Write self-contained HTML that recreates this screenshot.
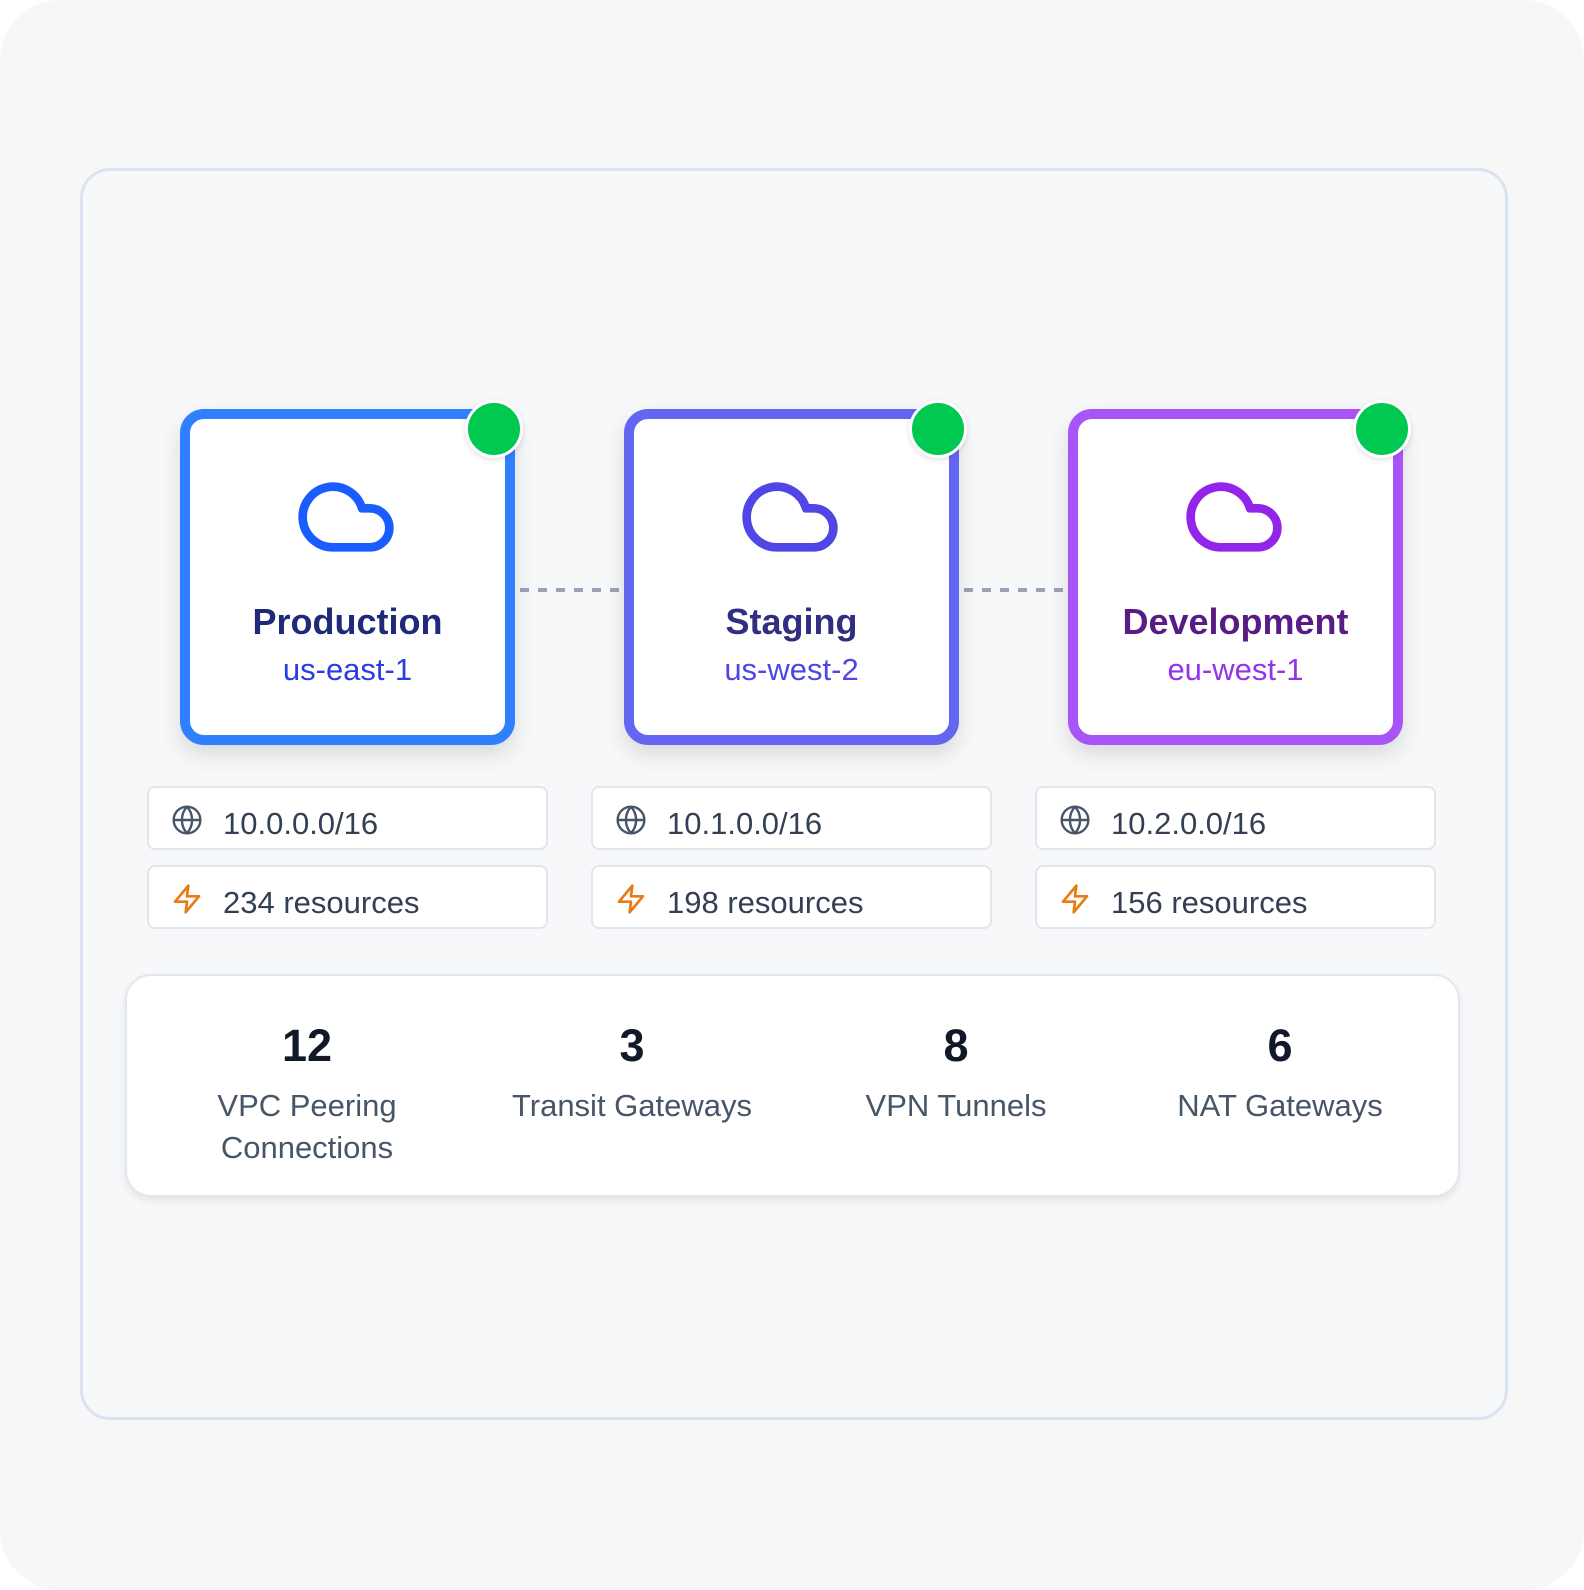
<!DOCTYPE html>
<html><head><meta charset="utf-8"><style>
*{margin:0;padding:0;box-sizing:border-box}
body{width:1584px;height:1590px;background:#fff;font-family:"Liberation Sans",sans-serif;position:relative;overflow:hidden}
.bg{position:absolute;left:0;top:0;width:1584px;height:1590px;background:#f7f7f7;border-radius:60px}
.frame{position:absolute;left:80px;top:168px;width:1428px;height:1252px;border:3px solid #d9e3f1;border-radius:30px;background:#f7f8fa}
.card{position:absolute;top:409px;width:335px;height:336px;border:10px solid;border-radius:24px;background:#fff;box-shadow:0 10px 22px rgba(0,0,0,.12);text-align:center}
.card svg{position:absolute;left:104px;top:46px}
.card .t{position:absolute;left:0;right:0;top:182px;font-size:36px;font-weight:bold}
.card .s{position:absolute;left:0;right:0;top:233px;font-size:31px}
.dot{position:absolute;width:58px;height:58px;border-radius:50%;background:#00c851;border:3px solid #fff;box-shadow:0 2px 6px rgba(0,0,0,.12)}
.line{position:absolute;top:588px;height:4px;background:repeating-linear-gradient(90deg,#9aa3b5 0 9px,transparent 9px 18px)}
.box{position:absolute;width:401px;height:64px;border:2px solid #e2e6ec;border-radius:8px;background:#fff;font-size:31px;color:#333f52}
.box svg{position:absolute;left:22px;top:16px}
.box span{position:absolute;left:74px;top:18px}
.panel{position:absolute;left:125px;top:974px;width:1335px;height:223px;background:#fff;border:2px solid #e3e7ec;border-radius:26px;box-shadow:0 4px 8px rgba(0,0,0,.08)}
.st{position:absolute;width:320px;margin-left:-160px;text-align:center}
.st b{display:block;font-size:45px;color:#111827;height:56px;line-height:56px;margin-top:46px}
.st div{font-size:31px;color:#475569;line-height:42px;margin-top:11px}
</style></head><body>
<div class="bg"></div>
<div class="frame"></div>

<div class="line" style="left:520px;width:108px"></div>
<div class="line" style="left:964px;width:108px"></div>

<div class="card" style="left:180px;border-color:#2f80ff">
<svg width="104" height="104" viewBox="0 0 24 24" fill="none" stroke="#1a5cff" stroke-width="2" stroke-linecap="round" stroke-linejoin="round"><path d="M17.5 19H9a7 7 0 1 1 6.71-9h1.790a4.5 4.5 0 1 1 0 9Z"/></svg>
<div class="t" style="color:#1e2a78">Production</div><div class="s" style="color:#2b3be6">us-east-1</div></div>
<div class="card" style="left:624px;border-color:#6366f1">
<svg width="104" height="104" viewBox="0 0 24 24" fill="none" stroke="#4f46e5" stroke-width="2" stroke-linecap="round" stroke-linejoin="round"><path d="M17.5 19H9a7 7 0 1 1 6.71-9h1.79a4.5 4.5 0 1 1 0 9Z"/></svg>
<div class="t" style="color:#312e81">Staging</div><div class="s" style="color:#4f46e5">us-west-2</div></div>
<div class="card" style="left:1068px;border-color:#a855f7">
<svg width="104" height="104" viewBox="0 0 24 24" fill="none" stroke="#9324ea" stroke-width="2" stroke-linecap="round" stroke-linejoin="round"><path d="M17.5 19H9a7 7 0 1 1 6.71-9h1.79a4.5 4.5 0 1 1 0 9Z"/></svg>
<div class="t" style="color:#581c87">Development</div><div class="s" style="color:#9333ea">eu-west-1</div></div>

<div class="dot" style="left:465px;top:400px"></div>
<div class="dot" style="left:909px;top:400px"></div>
<div class="dot" style="left:1353px;top:400px"></div>

<div class="box" style="left:147px;top:786px"><svg width="32" height="32" viewBox="0 0 24 24" fill="none" stroke="#475569" stroke-width="1.8"><circle cx="12" cy="12" r="10"/><path d="M2 12h20M12 2a15 15 0 0 1 0 20M12 2a15 15 0 0 0 0 20"/></svg><span>10.0.0.0/16</span></div>
<div class="box" style="left:147px;top:865px"><svg width="32" height="32" viewBox="0 0 24 24" fill="none" stroke="#ea7a12" stroke-width="2" stroke-linejoin="round"><path d="M13 2 3 14h9l-1 8 10-12h-9l1-8z"/></svg><span>234 resources</span></div>
<div class="box" style="left:591px;top:786px"><svg width="32" height="32" viewBox="0 0 24 24" fill="none" stroke="#475569" stroke-width="1.8"><circle cx="12" cy="12" r="10"/><path d="M2 12h20M12 2a15 15 0 0 1 0 20M12 2a15 15 0 0 0 0 20"/></svg><span>10.1.0.0/16</span></div>
<div class="box" style="left:591px;top:865px"><svg width="32" height="32" viewBox="0 0 24 24" fill="none" stroke="#ea7a12" stroke-width="2" stroke-linejoin="round"><path d="M13 2 3 14h9l-1 8 10-12h-9l1-8z"/></svg><span>198 resources</span></div>
<div class="box" style="left:1035px;top:786px"><svg width="32" height="32" viewBox="0 0 24 24" fill="none" stroke="#475569" stroke-width="1.8"><circle cx="12" cy="12" r="10"/><path d="M2 12h20M12 2a15 15 0 0 1 0 20M12 2a15 15 0 0 0 0 20"/></svg><span>10.2.0.0/16</span></div>
<div class="box" style="left:1035px;top:865px"><svg width="32" height="32" viewBox="0 0 24 24" fill="none" stroke="#ea7a12" stroke-width="2" stroke-linejoin="round"><path d="M13 2 3 14h9l-1 8 10-12h-9l1-8z"/></svg><span>156 resources</span></div>

<div class="panel"></div>
<div class="st" style="left:307px;top:972px"><b>12</b><div>VPC Peering<br>Connections</div></div>
<div class="st" style="left:632px;top:972px"><b>3</b><div>Transit Gateways</div></div>
<div class="st" style="left:956px;top:972px"><b>8</b><div>VPN Tunnels</div></div>
<div class="st" style="left:1280px;top:972px"><b>6</b><div>NAT Gateways</div></div>
</body></html>
